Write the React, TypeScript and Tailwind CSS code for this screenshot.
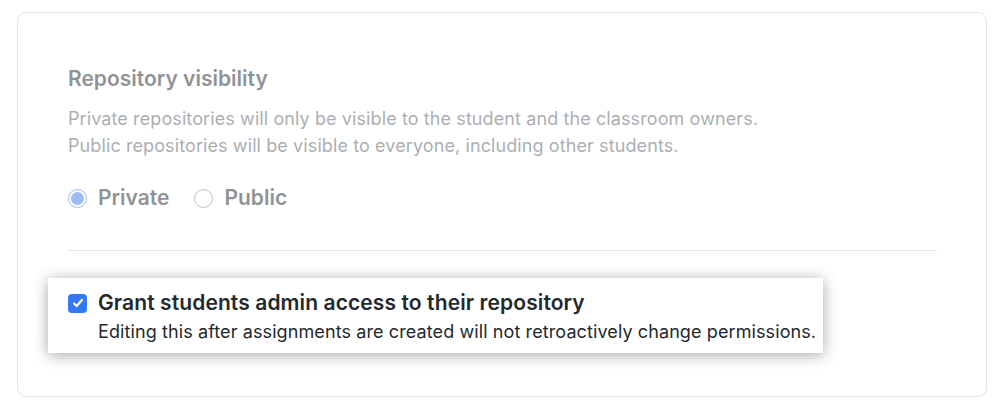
export default function App() {
  return (
    <div className="min-h-[410px] w-[1000px] bg-white px-[17px] pt-[12px] font-['Inter',sans-serif]">
      <div className="h-[385px] w-[970px] rounded-[9px] border border-[#e1e4e8] bg-white pl-[50px] pr-[49px] pt-[52px]">
        {/* greyed out visibility section */}
        <div className="opacity-50">
          <h3 className="text-[21px] font-semibold leading-[28px] text-[#24292e]">Repository visibility</h3>
          <p className="mt-[12px] text-[18px] leading-[27px] tracking-[0.1px] text-[#586069]">
            Private repositories will only be visible to the student and the classroom owners.
            <br />
            Public repositories will be visible to everyone, including other students.
          </p>
          <div className="mt-[25px] flex items-center">
            <span className="flex h-[19px] w-[19px] items-center justify-center rounded-full border border-[#3b7cf5] bg-white">
              <span className="h-[13px] w-[13px] rounded-full bg-[#3b7cf5]" />
            </span>
            <span className="ml-[11px] text-[21px] font-semibold leading-[28px] text-[#24292e]">Private</span>
            <span className="ml-[25px] h-[19px] w-[19px] rounded-full border border-[#888] bg-white" />
            <span className="ml-[11px] text-[21px] font-semibold leading-[28px] text-[#24292e]">Public</span>
          </div>
        </div>

        <div className="mt-[38px] h-px bg-[#e5e7ea]" />

        {/* highlighted option */}
        <div className="-ml-[20px] mt-[27px] w-fit bg-white pb-[9px] pl-[20px] pr-[7px] pt-[11px] shadow-[0_2px_14px_rgba(0,0,0,0.35)]">
          <div className="flex items-center">
            <span className="flex h-[19px] w-[19px] items-center justify-center rounded-[4px] bg-[#3478f6]">
              <svg viewBox="0 0 16 16" className="h-[14px] w-[14px]" fill="none" stroke="white" strokeWidth="2.5" strokeLinecap="round" strokeLinejoin="round">
                <path d="M3.5 8.5l3 3 6-7" />
              </svg>
            </span>
            <span className="ml-[11px] text-[21px] font-semibold leading-[28px] tracking-[0.1px] text-[#24292e]">
              Grant students admin access to their repository
            </span>
          </div>
          <p className="ml-[30px] mt-[3px] text-[18px] leading-[24px] tracking-[0.1px] text-[#24292e]">
            Editing this after assignments are created will not retroactively change permissions.
          </p>
        </div>
      </div>
    </div>
  );
}
